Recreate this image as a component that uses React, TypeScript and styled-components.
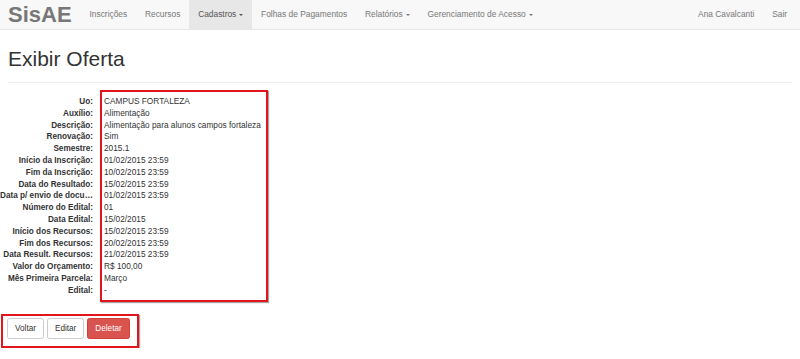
import React from "react";
import styled, { createGlobalStyle } from "styled-components";

const Global = createGlobalStyle`
  html, body { margin: 0; padding: 0; background: #fff; }
  body {
    font-family: "Liberation Sans", Arial, sans-serif;
    font-size: 8.3px;
    line-height: 11.8px;
    color: #333;
  }
  * { box-sizing: border-box; }
`;

const Navbar = styled.nav`
  display: flex;
  align-items: stretch;
  height: 30px;
  background: #f8f8f8;
  border-bottom: 1px solid #e7e7e7;
  padding: 0 4px 0 0;
`;

const Brand = styled.a`
  display: flex;
  align-items: center;
  padding: 0 9px 0 8px;
  font-size: 22px;
  font-weight: bold;
  color: #777;
  text-decoration: none;
  line-height: 29px;
`;

const NavList = styled.ul<{ $right?: boolean }>`
  display: flex;
  list-style: none;
  margin: 0;
  padding: 0;
  margin-left: ${(p) => (p.$right ? "auto" : "0")};
`;

const NavItem = styled.li<{ $active?: boolean }>`
  display: flex;
  align-items: center;
  padding: 0 8.9px;
  font-size: 8.4px;
  color: ${(p) => (p.$active ? "#555" : "#777")};
  background: ${(p) => (p.$active ? "#e7e7e7" : "transparent")};
  white-space: nowrap;
`;

const Caret = styled.span`
  display: inline-block;
  width: 0;
  height: 0;
  margin-left: 3px;
  vertical-align: middle;
  border-top: 2.4px solid currentColor;
  border-left: 2.4px solid transparent;
  border-right: 2.4px solid transparent;
`;

const Main = styled.main`
  padding: 0 8px;
`;

const PageHeader = styled.div`
  margin-top: 17px;
  padding-bottom: 12px;
  border-bottom: 1px solid #eee;
`;

const Title = styled.h1`
  margin: 0;
  font-size: 21px;
  line-height: 23px;
  font-weight: 400;
  color: #333;
`;

const Details = styled.div`
  display: flex;
  align-items: flex-start;
  margin: 7px 0 0 -8px;
`;

const Labels = styled.div`
  width: 93px;
  padding-top: 6px;
  display: flex;
  flex-direction: column;
`;

const Label = styled.div`
  font-size: 8.2px;
  font-weight: bold;
  text-align: right;
  white-space: nowrap;
  overflow: hidden;
  text-overflow: ellipsis;
`;

const Highlight = styled.div`
  border: 2px solid #e3141c;
  box-shadow: 1px 1px 1px rgba(0, 0, 0, 0.35);
`;

const Values = styled(Highlight)`
  margin-left: 7px;
  width: 168px;
  padding: 4px 2px 3px 2px;
  display: flex;
  flex-direction: column;
`;

const Value = styled.div`
  white-space: nowrap;
  min-height: 11.8px;
`;

const Actions = styled(Highlight)`
  display: inline-flex;
  gap: 3px;
  margin: 12px 0 0 -7px;
  padding: 2px 7px 7px 4px;
`;

const Button = styled.button<{ $danger?: boolean }>`
  font-family: inherit;
  font-size: 8.2px;
  line-height: 11.8px;
  padding: 4px 7px;
  height: 21px;
  border-radius: 2.4px;
  border: 1px solid ${(p) => (p.$danger ? "#d43f3a" : "#ccc")};
  background: ${(p) => (p.$danger ? "#d9534f" : "#fff")};
  color: ${(p) => (p.$danger ? "#fff" : "#333")};
  cursor: pointer;
`;

const rows: [string, string][] = [
  ["Uo:", "CAMPUS FORTALEZA"],
  ["Auxílio:", "Alimentação"],
  ["Descrição:", "Alimentação para alunos campos fortaleza"],
  ["Renovação:", "Sim"],
  ["Semestre:", "2015.1"],
  ["Início da Inscrição:", "01/02/2015 23:59"],
  ["Fim da Inscrição:", "10/02/2015 23:59"],
  ["Data do Resultado:", "15/02/2015 23:59"],
  ["Data p/ envio de documentos:", "01/02/2015 23:59"],
  ["Número do Edital:", "01"],
  ["Data Edital:", "15/02/2015"],
  ["Início dos Recursos:", "15/02/2015 23:59"],
  ["Fim dos Recursos:", "20/02/2015 23:59"],
  ["Data Result. Recursos:", "21/02/2015 23:59"],
  ["Valor do Orçamento:", "R$ 100,00"],
  ["Mês Primeira Parcela:", "Março"],
  ["Edital:", "-"],
];

export default function App() {
  return (
    <>
      <Global />
      <Navbar>
        <Brand href="#">SisAE</Brand>
        <NavList>
          <NavItem>Inscrições</NavItem>
          <NavItem>Recursos</NavItem>
          <NavItem $active>
            Cadastros <Caret />
          </NavItem>
          <NavItem>Folhas de Pagamentos</NavItem>
          <NavItem>
            Relatórios <Caret />
          </NavItem>
          <NavItem>
            Gerenciamento de Acesso <Caret />
          </NavItem>
        </NavList>
        <NavList $right>
          <NavItem>Ana Cavalcanti</NavItem>
          <NavItem>Sair</NavItem>
        </NavList>
      </Navbar>
      <Main>
        <PageHeader>
          <Title>Exibir Oferta</Title>
        </PageHeader>
        <Details>
          <Labels>
            {rows.map(([l]) => (
              <Label key={l}>{l}</Label>
            ))}
          </Labels>
          <Values>
            {rows.map(([l, v]) => (
              <Value key={l}>{v}</Value>
            ))}
          </Values>
        </Details>
        <Actions>
          <Button>Voltar</Button>
          <Button>Editar</Button>
          <Button $danger>Deletar</Button>
        </Actions>
      </Main>
    </>
  );
}
